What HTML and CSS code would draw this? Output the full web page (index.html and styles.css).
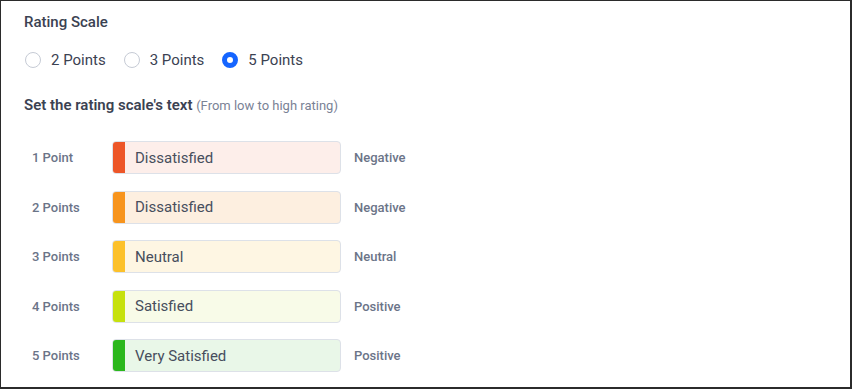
FILE: index.html
```html
<!DOCTYPE html>
<html>
<head>
<meta charset="utf-8">
<link rel="stylesheet" href="styles.css">
</head>
<body>
<div class="frame">
  <div class="title">Rating Scale</div>
  <div class="radios">
    <label class="radio"><span class="circle"></span>2 Points</label>
    <label class="radio"><span class="circle"></span>3 Points</label>
    <label class="radio"><span class="circle on"></span>5 Points</label>
  </div>
  <div class="subtitle">Set the rating scale's text <span class="hint">(From low to high rating)</span></div>
  <div class="rows">
    <div class="row">
      <div class="pt">1 Point</div>
      <div class="box c1"><span class="strip"></span><span class="val">Dissatisfied</span></div>
      <div class="sent">Negative</div>
    </div>
    <div class="row">
      <div class="pt">2 Points</div>
      <div class="box c2"><span class="strip"></span><span class="val">Dissatisfied</span></div>
      <div class="sent">Negative</div>
    </div>
    <div class="row">
      <div class="pt">3 Points</div>
      <div class="box c3"><span class="strip"></span><span class="val">Neutral</span></div>
      <div class="sent">Neutral</div>
    </div>
    <div class="row">
      <div class="pt">4 Points</div>
      <div class="box c4"><span class="strip"></span><span class="val">Satisfied</span></div>
      <div class="sent">Positive</div>
    </div>
    <div class="row">
      <div class="pt">5 Points</div>
      <div class="box c5"><span class="strip"></span><span class="val">Very Satisfied</span></div>
      <div class="sent">Positive</div>
    </div>
  </div>
</div>
</body>
</html>
```
FILE: styles.css
```css
html, body { margin: 0; padding: 0; background: #fff; }
body { font-family: Roboto, "Noto Sans", sans-serif; color: #3b4252; }
.frame {
  box-sizing: border-box;
  width: 852px;
  height: 389px;
  border: 1px solid #2b2b2b;
  border-right-width: 2px;
  border-bottom-width: 2px;
  padding: 11px 0 0 23px;
}
.title { font-size: 15px; font-weight: 500; line-height: 20px; color: #3b4252; }
.radios { display: flex; gap: 18px; margin-top: 18px; margin-left: 1px; height: 20px; align-items: center; }
.radio { display: flex; align-items: center; font-size: 15px; color: #3b4252; }
.circle {
  box-sizing: border-box;
  width: 16px; height: 16px;
  border: 1px solid #c6cbd5;
  border-radius: 50%;
  margin-right: 10px;
  background: #fff;
}
.circle.on { border: 5px solid #1565ff; }
.subtitle { margin-top: 25px; font-size: 15px; font-weight: 600; line-height: 20px; color: #3b4252; }
.hint { font-size: 13px; font-weight: 400; color: #7a8296; }
.rows { display: flex; flex-direction: column; gap: 16.5px; margin-top: 25px; }
.row { display: flex; align-items: center; height: 33px; }
.pt { width: 88px; padding-left: 8px; box-sizing: border-box; font-size: 13px; font-weight: 500; color: #6b7488; }
.box {
  box-sizing: border-box;
  width: 229px; height: 33px;
  border: 1px solid #dde1e8;
  border-radius: 4px;
  display: flex; align-items: center;
  overflow: hidden;
}
.strip { width: 13px; align-self: stretch; margin: -1px 0 -1px -1px; border-radius: 4px 0 0 4px; }
.val { padding-left: 10px; font-size: 15px; color: #474e5d; }
.sent { margin-left: 13px; font-size: 13px; font-weight: 500; color: #6b7488; }
.c1 { background: #fdeeea; } .c1 .strip { background: #ed5628; }
.c2 { background: #fdefe0; } .c2 .strip { background: #f7941d; }
.c3 { background: #fef6e3; } .c3 .strip { background: #fcc12b; }
.c4 { background: #f8fbe8; } .c4 .strip { background: #c6e10e; }
.c5 { background: #e9f7e8; } .c5 .strip { background: #2bb71c; }
```
